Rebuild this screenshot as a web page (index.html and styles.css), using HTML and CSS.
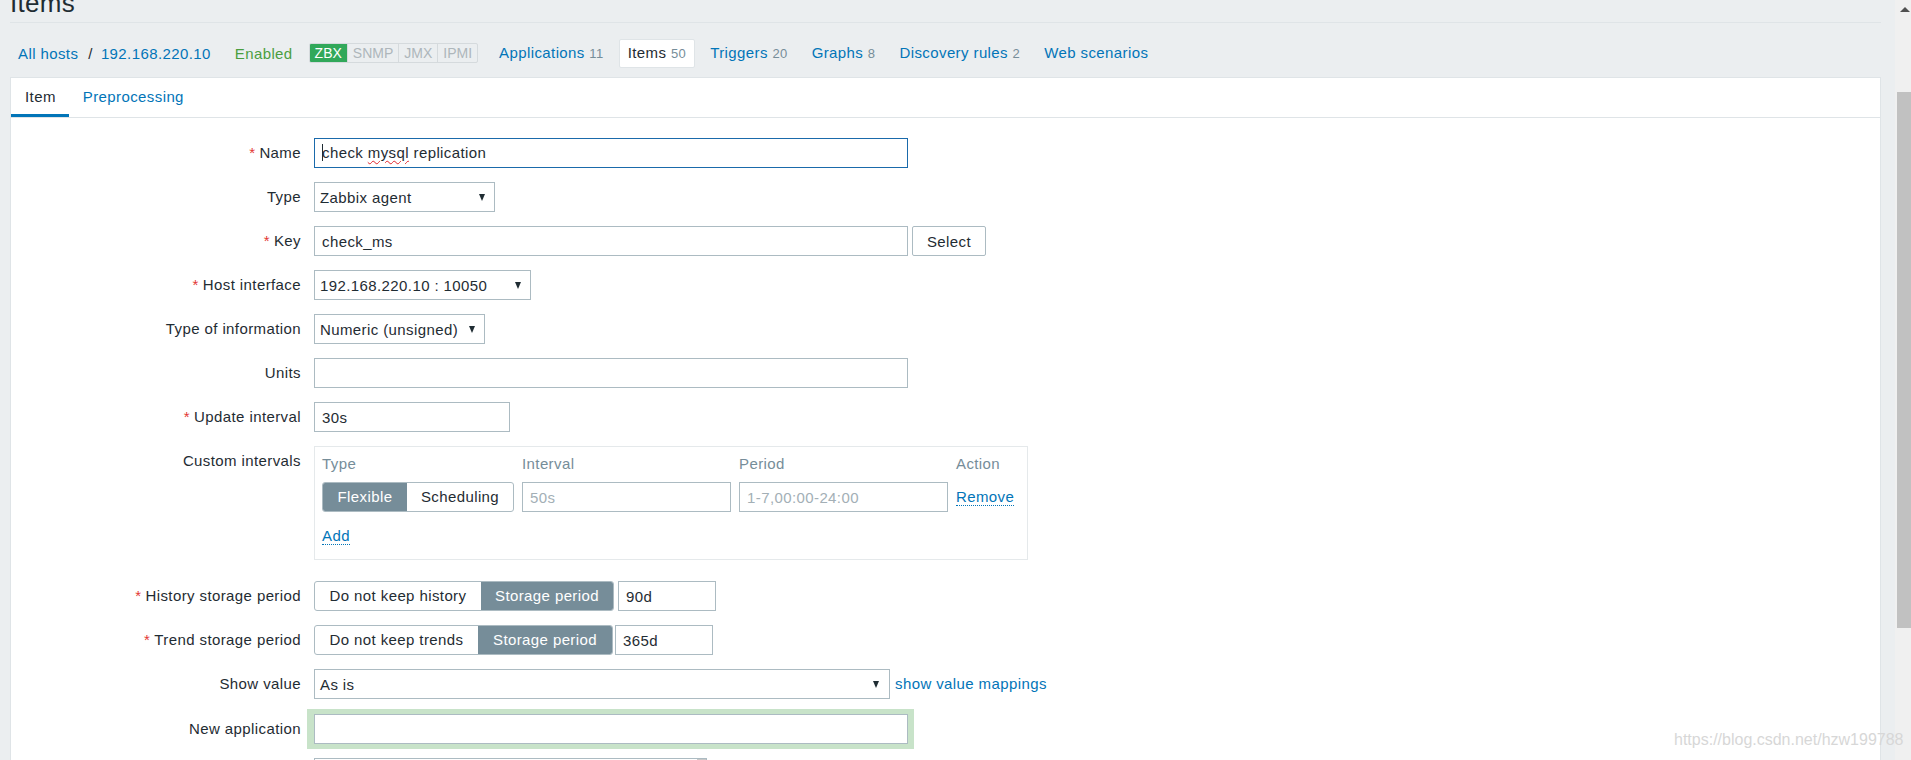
FILE: index.html
```html
<!DOCTYPE html>
<html lang="en">
<head>
<meta charset="utf-8">
<title>Items</title>
<link rel="stylesheet" href="styles.css">
</head>
<body>
<div class="page">
  <div class="main">
    <header class="header-title"><h1>Items</h1></header>

    <nav class="object-nav">
      <a href="#">All hosts</a>
      <span class="sep">/</span>
      <a href="#">192.168.220.10</a>
      <span class="status-enabled">Enabled</span>
      <div class="status-container">
        <span class="status-green">ZBX</span><span>SNMP</span><span>JMX</span><span>IPMI</span>
      </div>
      <ul class="nav-tabs">
        <li><a href="#">Applications</a> <span class="count">11</span></li>
        <li class="selected">Items <span class="count">50</span></li>
        <li><a href="#">Triggers</a> <span class="count">20</span></li>
        <li><a href="#">Graphs</a> <span class="count">8</span></li>
        <li><a href="#">Discovery rules</a> <span class="count">2</span></li>
        <li><a href="#">Web scenarios</a></li>
      </ul>
    </nav>

    <div class="panel">
      <ul class="tabs">
        <li class="active">Item</li>
        <li><a href="#">Preprocessing</a></li>
      </ul>

      <div class="form">
        <div class="form-row">
          <div class="form-label req">Name</div>
          <div class="input w-wide focus"><span class="caret"></span>check <span class="spell">mysql</span> replication</div>
        </div>

        <div class="form-row">
          <div class="form-label">Type</div>
          <div class="select w-type">Zabbix agent</div>
        </div>

        <div class="form-row">
          <div class="form-label req">Key</div>
          <input class="input w-wide" type="text" value="check_ms">
          <button class="btn-alt" type="button">Select</button>
        </div>

        <div class="form-row">
          <div class="form-label req">Host interface</div>
          <div class="select w-host">192.168.220.10 : 10050</div>
        </div>

        <div class="form-row">
          <div class="form-label">Type of information</div>
          <div class="select w-info">Numeric (unsigned)</div>
        </div>

        <div class="form-row">
          <div class="form-label">Units</div>
          <input class="input w-wide" type="text" value="">
        </div>

        <div class="form-row">
          <div class="form-label req">Update interval</div>
          <input class="input w-small" type="text" value="30s">
        </div>

        <div class="form-row row-custom">
          <div class="form-label">Custom intervals</div>
          <div class="custom-box">
            <div class="ci-grid">
              <div class="ci-head">Type</div>
              <div class="ci-head">Interval</div>
              <div class="ci-head">Period</div>
              <div class="ci-head">Action</div>

              <div class="seg-group">
                <span class="seg on seg-flex">Flexible</span><span class="seg seg-sched">Scheduling</span>
              </div>
              <input class="input placeholder" type="text" placeholder="50s">
              <input class="input placeholder" type="text" placeholder="1-7,00:00-24:00">
              <div class="ci-action"><a class="dotted" href="#">Remove</a></div>
            </div>
            <div class="ci-add"><a class="dotted" href="#">Add</a></div>
          </div>
        </div>

        <div class="form-row">
          <div class="form-label req">History storage period</div>
          <div class="seg-group">
            <span class="seg seg-hist-off">Do not keep history</span><span class="seg on seg-hist-on">Storage period</span>
          </div>
          <input class="input w-period gap-4" type="text" value="90d">
        </div>

        <div class="form-row">
          <div class="form-label req">Trend storage period</div>
          <div class="seg-group">
            <span class="seg seg-trend-off">Do not keep trends</span><span class="seg on seg-trend-on">Storage period</span>
          </div>
          <input class="input w-period gap-2" type="text" value="365d">
        </div>

        <div class="form-row row-show">
          <div class="form-label">Show value</div>
          <div class="select w-show">As is</div>
          <a class="side-link" href="#">show value mappings</a>
        </div>

        <div class="form-row">
          <div class="form-label">New application</div>
          <input class="input w-wide highlight" type="text" value="">
        </div>

        <div class="form-row">
          <div class="form-label"></div>
          <div class="listbox"><div class="listbox-sb"></div></div>
        </div>
      </div>
    </div>
  </div>

  <div class="scrollbar">
    <div class="sb-up"></div>
    <div class="sb-thumb"></div>
  </div>
</div>

<div class="watermark">https://blog.csdn.net/hzw199788</div>
</body>
</html>
```

FILE: styles.css
```css
* { box-sizing: border-box; }

html, body {
  margin: 0;
  height: 760px;
  overflow: hidden;
}

body {
  position: relative;
  background: #ebeef0;
  font-family: "Liberation Sans", Arial, sans-serif;
  font-size: 15px;
  letter-spacing: 0.4px;
  color: #1f2c33;
}

a { color: #0275b8; text-decoration: none; }

.page {
  display: flex;
  height: 760px;
}

.main {
  flex: 1;
  min-width: 0;
  padding: 0 14px 0 10px;
}

/* header */
.header-title {
  display: flow-root;
  height: 23px;
  border-bottom: 1px solid #dfe4e7;
}
.header-title h1 {
  margin: -12px 0 0 0;
  font-size: 26px;
  font-weight: normal;
  line-height: 30px;
  letter-spacing: 0.3px;
  color: #1f2c33;
}

/* object navigation */
.object-nav {
  display: flex;
  align-items: center;
  height: 28px;
  margin-top: 16px;
  padding-left: 8px;
}
.sep { margin: 0 8px 0 10px; color: #1f2c33; }
.status-enabled { color: #4a9e3f; margin-left: 24px; }

.status-container {
  display: flex;
  margin-left: 16px;
  height: 20px;
  border: 1px solid #d5dadd;
  border-radius: 2px;
  font-size: 14px;
  line-height: 18px;
  letter-spacing: 0;
  overflow: hidden;
}
.status-container span {
  padding: 0 5px;
  color: #aeb6bb;
  border-left: 1px solid #d5dadd;
}
.status-container .status-green {
  background: #31a85a;
  color: #fff;
  border-left: none;
}

.nav-tabs {
  display: flex;
  gap: 6px;
  margin: 0 0 0 12px;
  padding: 0;
  list-style: none;
}
.nav-tabs li {
  padding: 0 8px;
  line-height: 26px;
  border: 1px solid transparent;
  border-radius: 2px;
}
.nav-tabs li.selected {
  background: #fff;
  border-color: #dfe4e7;
  color: #1f2c33;
}
.count { color: #768d99; font-size: 13px; }

/* panel */
.panel {
  margin-top: 10px;
  background: #fff;
  border: 1px solid #dfe4e7;
  height: 720px;
}
.tabs {
  display: flex;
  margin: 0;
  padding: 0;
  list-style: none;
  height: 40px;
  border-bottom: 1px solid #dfe4e7;
}
.tabs li {
  padding: 0 13px 0 14px;
  line-height: 37px;
  border-bottom: 3px solid transparent;
}
.tabs li.active { border-bottom-color: #0275b8; color: #1f2c33; }

/* form */
.form { padding-top: 20px; }
.form-row {
  display: flex;
  align-items: flex-start;
  margin-bottom: 14px;
}
.form-row.row-custom { margin-bottom: 21px; }
.form-row.row-show { margin-bottom: 15px; }
.form-label {
  flex: none;
  width: 303px;
  padding-right: 13px;
  text-align: right;
  line-height: 30px;
  min-height: 30px;
}
.req::before {
  content: "*";
  color: #e33734;
  margin-right: 4px;
}

.input {
  height: 30px;
  border: 1px solid #acbbc2;
  background: #fff;
  padding: 0 7px;
  font-family: inherit;
  font-size: 15px;
  letter-spacing: 0.4px;
  line-height: 28px;
  color: #1f2c33;
  outline: none;
  border-radius: 0;
}
.input::placeholder { color: #a3afb6; }
.input.focus { border-color: #1a6aab; white-space: nowrap; }
.caret {
  display: inline-block;
  width: 1px;
  height: 17px;
  margin-right: -1px;
  background: #1f2c33;
  vertical-align: -3px;
}
.spell {
  text-decoration: underline wavy #e0242b;
  text-decoration-thickness: 1px;
  text-underline-offset: 2px;
}

.w-wide { width: 594px; }
.w-small { width: 196px; }
.w-period { width: 98px; }
.gap-4 { margin-left: 4px; }
.gap-2 { margin-left: 2px; }

.select {
  display: flex;
  align-items: center;
  justify-content: space-between;
  height: 30px;
  padding: 0 9px 0 5px;
  border: 1px solid #acbbc2;
  background: #fff;
  white-space: nowrap;
}
.select::after {
  content: "";
  width: 0;
  height: 0;
  border-left: 3.5px solid transparent;
  border-right: 3.5px solid transparent;
  border-top: 7px solid #1f2c33;
}
.w-type { width: 181px; }
.w-host { width: 217px; }
.w-info { width: 171px; }
.w-show { width: 576px; padding-right: 10px; }

.btn-alt {
  margin-left: 4px;
  width: 74px;
  height: 30px;
  border: 1px solid #acbbc2;
  border-radius: 2px;
  background: #fff;
  font-family: inherit;
  font-size: 15px;
  letter-spacing: 0.4px;
  color: #1f2c33;
  padding: 0;
}

/* custom intervals */
.custom-box {
  width: 714px;
  height: 114px;
  border: 1px solid #e5e9eb;
  padding: 2px 13px 0 7px;
}
.ci-grid {
  display: grid;
  grid-template-columns: 192px 209px 209px auto;
  column-gap: 8px;
  row-gap: 3px;
}
.ci-head { color: #768d99; line-height: 30px; }
.ci-grid .input { width: 100%; }
.ci-action { line-height: 30px; }
.ci-add { margin-top: 12px; line-height: 24px; }
.dotted { border-bottom: 1px dotted #0275b8; }

.seg-group {
  display: flex;
  height: 30px;
  border: 1px solid #acbbc2;
  border-radius: 3px;
  overflow: hidden;
  background: #fff;
}
.seg {
  line-height: 28px;
  text-align: center;
  white-space: nowrap;
  color: #1f2c33;
}
.seg.on { background: #768d99; color: #fff; }
.seg-flex { width: 84px; }
.seg-sched { width: 106px; }
.seg-hist-off { width: 166px; }
.seg-hist-on { width: 132px; }
.seg-trend-off { width: 163px; }
.seg-trend-on { width: 134px; }

.side-link { margin-left: 5px; line-height: 30px; }

.highlight {
  box-shadow: 0 0 0 5px #c8e3c9, -2px 0 0 5px #c8e3c9, 1px 0 0 5px #c8e3c9;
}

.listbox {
  display: flex;
  justify-content: flex-end;
  width: 393px;
  height: 120px;
  border: 1px solid #acbbc2;
}
.listbox-sb { width: 9px; background: #c8c8c8; }

/* fake window scrollbar */
.scrollbar {
  flex: none;
  width: 16px;
  display: flex;
  flex-direction: column;
  align-items: flex-end;
  background: #f0f0f0;
}
.sb-up {
  margin: 7px 1px 0 0;
  width: 0;
  height: 0;
  border-left: 5px solid transparent;
  border-right: 5px solid transparent;
  border-bottom: 5px solid #505050;
}
.sb-thumb {
  margin-top: 80px;
  width: 14px;
  height: 536px;
  background: #c1c1c1;
}

/* watermark overlay */
.watermark {
  position: absolute;
  left: 1674px;
  top: 731px;
  font-size: 16px;
  letter-spacing: 0;
  color: #d7d7d7;
  white-space: nowrap;
}
```
